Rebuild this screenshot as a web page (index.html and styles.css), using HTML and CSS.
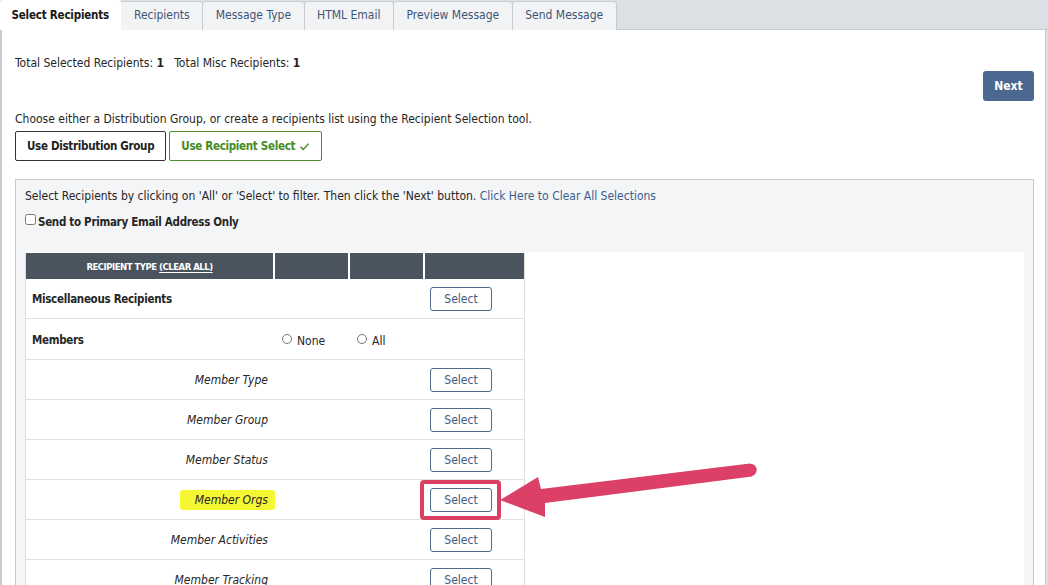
FILE: index.html
```html
<!DOCTYPE html>
<html>
<head>
<meta charset="utf-8">
<link rel="stylesheet" href="styles.css">
</head>
<body>
<nav class="tabs">
  <div class="tab active">Select Recipients</div>
  <div class="tab">Recipients</div>
  <div class="tab">Message Type</div>
  <div class="tab">HTML Email</div>
  <div class="tab">Preview Message</div>
  <div class="tab">Send Message</div>
</nav>
<main class="content">
  <p class="totals">Total Selected Recipients: <b>1</b>&nbsp;&nbsp; Total Misc Recipients: <b>1</b></p>
  <div class="next-row"><button class="btn-next">Next</button></div>
  <p class="choose">Choose either a Distribution Group, or create a recipients list using the Recipient Selection tool.</p>
  <div class="mode-buttons">
    <button class="btn-mode">Use Distribution Group</button>
    <button class="btn-mode selected">Use Recipient Select <svg class="check" viewBox="0 0 12 10" width="11" height="9"><path d="M1.5 5.2 L4.6 8.2 L10.6 1.8" fill="none" stroke="currentColor" stroke-width="1.6"/></svg></button>
  </div>
  <section class="panel">
    <p class="instructions">Select Recipients by clicking on 'All' or 'Select' to filter. Then click the 'Next' button. <a href="#">Click Here to Clear All Selections</a></p>
    <label class="primary"><input type="checkbox" class="cb"> Send to Primary Email Address Only</label>
    <div class="table-wrap">
      <div class="rtable">
        <div class="row head">
          <div class="cell">RECIPIENT TYPE&nbsp; <u>(CLEAR ALL)</u></div>
          <div class="cell"></div>
          <div class="cell"></div>
          <div class="cell"></div>
        </div>
        <div class="row">
          <div class="cell label">Miscellaneous Recipients</div>
          <div class="cell"></div>
          <div class="cell"></div>
          <div class="cell act"><button class="btn-select">Select</button></div>
        </div>
        <div class="row members">
          <div class="cell label">Members</div>
          <div class="cell radio-cell"><span class="radio"></span>None</div>
          <div class="cell radio-cell"><span class="radio"></span>All</div>
          <div class="cell act"></div>
        </div>
        <div class="row">
          <div class="cell sub">Member Type</div>
          <div class="cell"></div>
          <div class="cell"></div>
          <div class="cell act"><button class="btn-select">Select</button></div>
        </div>
        <div class="row">
          <div class="cell sub">Member Group</div>
          <div class="cell"></div>
          <div class="cell"></div>
          <div class="cell act"><button class="btn-select">Select</button></div>
        </div>
        <div class="row">
          <div class="cell sub">Member Status</div>
          <div class="cell"></div>
          <div class="cell"></div>
          <div class="cell act"><button class="btn-select">Select</button></div>
        </div>
        <div class="row">
          <div class="cell sub"><span class="hl">Member Orgs</span></div>
          <div class="cell"></div>
          <div class="cell"></div>
          <div class="cell act"><span class="boxed"><button class="btn-select">Select</button></span></div>
        </div>
        <div class="row">
          <div class="cell sub">Member Activities</div>
          <div class="cell"></div>
          <div class="cell"></div>
          <div class="cell act"><button class="btn-select">Select</button></div>
        </div>
        <div class="row">
          <div class="cell sub">Member Tracking</div>
          <div class="cell"></div>
          <div class="cell"></div>
          <div class="cell act"><button class="btn-select">Select</button></div>
        </div>
      </div>
    </div>
  </section>
</main>
<svg class="arrow" width="1048" height="585" viewBox="0 0 1048 585">
  <polygon points="750,463.5 541,489 538,477 500,500 545,517 545,503 752,476.5" fill="#dd4066"/>
  <circle cx="750.5" cy="470" r="6.2" fill="#dd4066"/>
</svg>
</body>
</html>
```
FILE: styles.css
```css
* { box-sizing: border-box; }
html, body { margin: 0; padding: 0; }
body {
  width: 1048px;
  height: 585px;
  overflow: hidden;
  background: #dcdfe3;
  font-family: "DejaVu Sans Condensed", "DejaVu Sans", Roboto, sans-serif;
  font-size: 12px;
  color: #262626;
  position: relative;
}
p { margin: 0; }
b { font-weight: bold; }

.tabs {
  display: flex;
  height: 30px;
  border-bottom: 1px solid #c8ccd2;
  padding-top: 1px;
}
.tab {
  height: 29px;
  line-height: 26px;
  padding: 0 12.5px;
  background: #f2f3f5;
  border: 1px solid #c8ccd2;
  border-bottom: none;
  border-left: none;
  border-radius: 3px 3px 0 0;
  color: #3d5677;
  font-size: 12px;
}
.tab.active {
  background: #fff;
  color: #161616;
  font-weight: bold;
  font-size: 11.5px;
  letter-spacing: -0.2px;
  height: 30px;
  border-color: #fff;
  margin-top: -1px;
  padding: 1px 11.5px 0;
}

.content {
  background: #fff;
  margin-right: 2px;
  border-left: 2px solid #c8ccd2;
  border-right: 1px solid #c8ccd2;
  padding: 25px 11px 0 13px;
  height: 555px;
  overflow: hidden;
}
.totals { line-height: 16px; }
.next-row { display: flex; justify-content: flex-end; }
.btn-next {
  width: 51px;
  height: 30px;
  background: #4b6990;
  color: #fff;
  font-family: inherit;
  font-size: 12px;
  font-weight: bold;
  border: none;
  border-radius: 3px;
  padding: 0;
}
.choose { line-height: 16px; margin-top: 10px; }
.mode-buttons { display: flex; gap: 3px; margin-top: 4px; }
.btn-mode {
  height: 30px;
  padding: 0 11px;
  background: #fff;
  border: 1px solid #333;
  border-radius: 2px;
  font-family: inherit;
  font-size: 11.5px;
  letter-spacing: -0.3px;
  font-weight: bold;
  color: #222;
  display: flex;
  align-items: center;
  gap: 4px;
}
.btn-mode.selected { border-color: #4c8d2c; color: #468a24; }

.panel {
  margin-top: 18px;
  background: #f4f5f7;
  border: 1px solid #c5c9ce;
  padding: 8px 9px 0 9px;
  height: 420px;
}
.instructions { line-height: 16px; }
.instructions a { color: #3b5f8c; text-decoration: none; }
.primary {
  display: flex;
  align-items: center;
  margin-top: 10px;
  line-height: 16px;
  font-weight: bold;
  font-size: 11.5px;
  letter-spacing: -0.3px;
  gap: 2px;
}
.cb {
  margin: 0;
  width: 11px;
  height: 11px;
  position: relative;
  top: -3px;
}
.table-wrap {
  margin-top: 22px;
  background: #fff;
  padding-top: 1px;
  height: 400px;
}
.rtable {
  width: 500px;
  border-left: 1px solid #dedede;
  border-right: 1px solid #dedede;
}
.row {
  display: grid;
  grid-template-columns: 247px 73px 73px 99px;
  column-gap: 2px;
  height: 40px;
  border-bottom: 1px solid #e1e1e1;
  align-items: center;
}
.row.members { height: 41px; }
.row .cell { height: 100%; display: flex; align-items: center; padding-top: 1px; }
.row.head { height: 26px; border-bottom: none; }
.row.head .cell {
  background: #4a545f;
  color: #fff;
  font-size: 9.5px;
  font-weight: bold;
  justify-content: center;
  letter-spacing: -0.5px;
  padding-top: 0;
}
.row.head u { text-underline-offset: 2px; }
.label { font-weight: bold; font-size: 11.5px; letter-spacing: -0.3px; padding-left: 6px; }
.sub { font-style: italic; justify-content: flex-end; padding-right: 5px; }
.act { padding-left: 5px; }
.radio-cell { padding-left: 7px; gap: 5px; padding-top: 3px !important; }
.radio {
  width: 10px;
  height: 10px;
  border: 1px solid #777;
  border-radius: 50%;
  background: #fff;
  margin-top: -3px;
}
.btn-select {
  width: 62px;
  height: 24px;
  padding: 0;
  background: #fff;
  border: 1px solid #4d6a8f;
  border-radius: 3px;
  color: #3c5c85;
  font-family: inherit;
  font-size: 12px;
}
.hl {
  background: #f5f733;
  border-radius: 3px;
  padding: 3px 7px 3px 15px;
  margin-right: -7px;
}
.boxed { position: relative; display: inline-flex; }
.boxed::after {
  content: "";
  position: absolute;
  top: -8px;
  bottom: -8px;
  left: -10px;
  right: -9px;
  border: 4px solid #dc3f64;
  border-radius: 4px;
}
.arrow { position: absolute; left: 0; top: 0; pointer-events: none; }
```
